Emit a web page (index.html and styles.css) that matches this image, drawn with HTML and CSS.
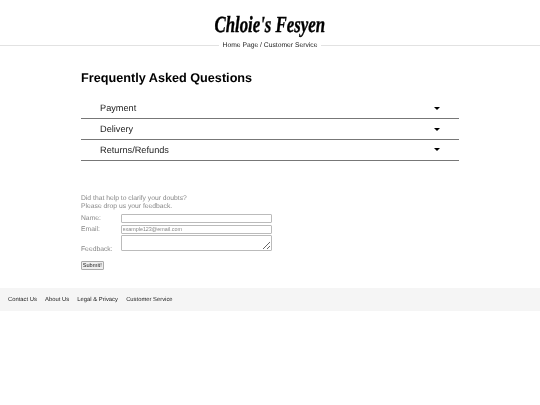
FILE: index.html
```html
<!DOCTYPE html>
<html lang="en">
<head>
<meta charset="utf-8">
<title>Chloie's Fesyen</title>
<link rel="stylesheet" href="styles.css">
</head>
<body>
<header class="site-header">
  <h1 class="logo"><span class="logo-text">Chloie's Fesyen</span></h1>
  <div class="crumb-row"><nav class="crumbs">Home Page / Customer Service</nav></div>
</header>
<main class="content">
  <h2 class="title">Frequently Asked Questions</h2>
  <ul class="faq">
    <li class="faq-item"><span>Payment</span><i class="caret"></i></li>
    <li class="faq-item"><span>Delivery</span><i class="caret"></i></li>
    <li class="faq-item"><span>Returns/Refunds</span><i class="caret"></i></li>
  </ul>
  <form class="feedback">
    <p class="intro">Did that help to clarify your doubts?<br>Please drop us your feedback.</p>
    <div class="fields">
      <label class="lbl" for="n">Name:</label><input class="inp" id="n" type="text">
      <label class="lbl" for="e">Email:</label><input class="inp" id="e" type="text" placeholder="example123@email.com">
      <label class="lbl lbl-end" for="f">Feedback:</label><textarea class="inp area" id="f"></textarea>
    </div>
    <button class="submit" type="button">Submit!</button>
  </form>
</main>
<footer class="site-footer">
  <a>Contact Us</a><a>About Us</a><a>Legal &amp; Privacy</a><a>Customer Service</a>
</footer>
</body>
</html>
```
FILE: styles.css
```css
* { box-sizing: border-box; }
html, body { margin: 0; padding: 0; background: #fff; }
body { font-family: "Liberation Sans", Arial, sans-serif; color: #000; width: 540px; height: 405px; overflow: hidden; text-rendering: geometricPrecision; filter: blur(0.3px); }
.site-header { padding-top: 10px; }
.logo { margin: 0; height: 30px; text-align: center; font: italic bold 23px/30px "Liberation Serif", serif; color: #000; -webkit-text-stroke: 0.4px #000; }
.logo-text { display: inline-block; transform: scaleX(0.73); transform-origin: 50% 50%; }
.crumb-row { height: 11px; display: flex; align-items: center; justify-content: center; position: relative; }
.crumb-row::before { content: ""; position: absolute; left: 0; right: 0; top: 5px; height: 1px; background: #e2e2e2; }
.crumbs { position: relative; background: #fff; padding: 0 4px; font-size: 6.75px; line-height: 11px; color: #222; }
.content { padding: 0 81px; }
.title { margin: 18px 0 0; font-size: 12.67px; line-height: 18px; font-weight: bold; }
.faq { list-style: none; margin: 11.5px 0 0; padding: 0; }
.faq-item { height: 20.75px; display: flex; align-items: center; justify-content: space-between; padding: 0 19px; font-size: 9.2px; color: #222; border-bottom: 1px solid #777; }
.caret { width: 0; height: 0; border-left: 3px solid transparent; border-right: 3px solid transparent; border-top: 3px solid #000; }
.feedback { margin-top: 34px; color: #888; font-size: 6.75px; }
.intro { margin: 0; line-height: 8px; }
.fields { display: grid; grid-template-columns: 39.5px 151.5px; row-gap: 1.5px; margin-top: 3.5px; }
.lbl { line-height: 9px; align-self: center; }
.lbl-end { align-self: end; margin-bottom: -2.5px; }
.inp { height: 9px; margin: 0; padding: 0 1px; border: 1px solid #bbb; border-radius: 1px; font: 5.4px "Liberation Sans", sans-serif; width: 151.5px; display: block; background: #fff; }
.inp::placeholder { color: #888; }
.area { height: 16px; resize: vertical; }
.submit { display: block; margin-top: 9.5px; width: 22.5px; height: 9px; padding: 0; font: 5.6px "Liberation Sans", sans-serif; border: 1px solid #aaa; border-radius: 1px; background: #efefef; color: #222; }
.site-footer { margin-top: 18.5px; height: 23px; background: #f5f5f5; display: flex; align-items: center; gap: 8.2px; padding-left: 8px; font-size: 5.85px; color: #222; }
```
